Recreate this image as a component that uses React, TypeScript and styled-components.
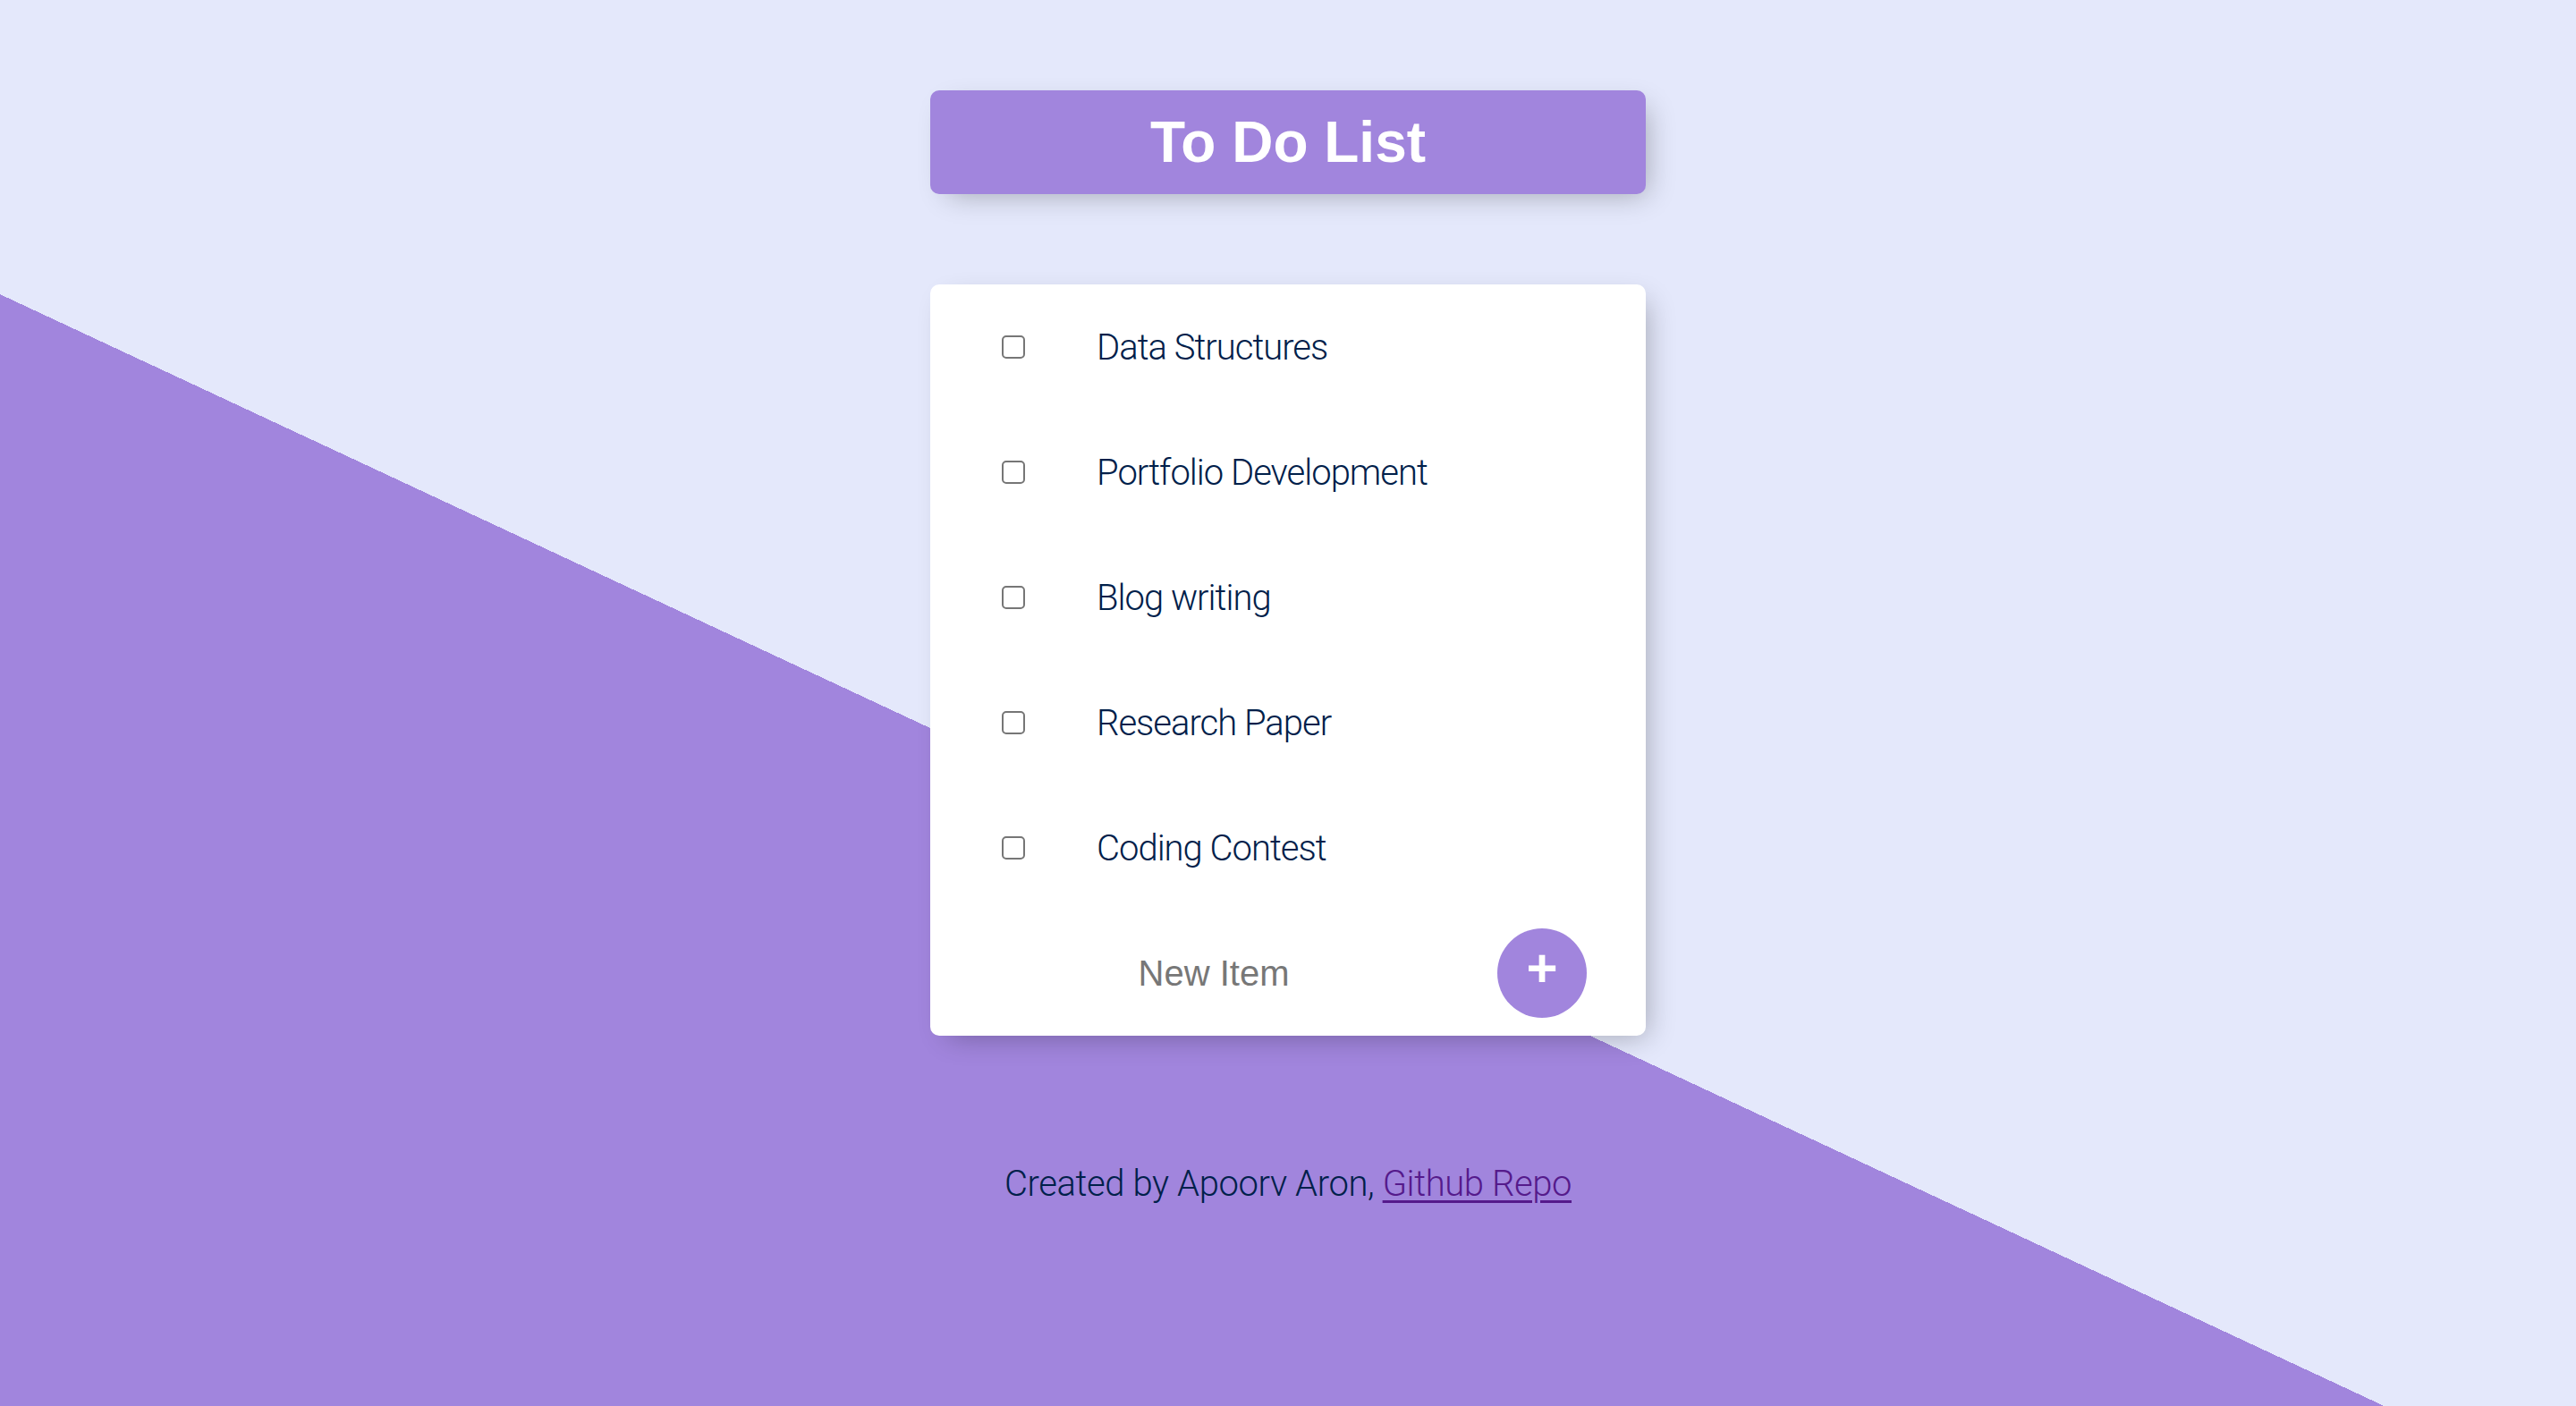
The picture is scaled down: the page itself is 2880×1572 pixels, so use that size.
import React from 'react';
import styled, { createGlobalStyle } from 'styled-components';

const lavender = '#E4E8FB';
const purple = '#A185DD';
const navy = '#00204A';

const GlobalStyle = createGlobalStyle`
  html, body {
    margin: 0;
    padding: 0;
  }
  body {
    background: ${lavender};
    font-family: Roboto, "Liberation Sans", sans-serif;
  }
`;

const Page = styled.div`
  min-height: 100vh;
  box-sizing: border-box;
  padding-top: 101px;
  overflow: hidden;
  background: linear-gradient(205deg, ${lavender} 57.36%, ${purple} 57.36%);
`;

const Box = styled.div`
  width: 800px;
  margin: 0 auto;
  border-radius: 10px;
  box-shadow: 10px 10px 30px -10px rgba(0, 0, 0, 0.3);
`;

const Heading = styled(Box)`
  height: 116px;
  display: flex;
  align-items: center;
  justify-content: center;
  background: ${purple};
`;

const Title = styled.h1`
  margin: 0;
  font-family: "Liberation Sans", Arial, sans-serif;
  font-size: 64px;
  font-weight: 700;
  color: #fff;
`;

const Card = styled(Box)`
  margin-top: 101px;
  background: #fff;
`;

const Item = styled.div`
  height: 140px;
  display: flex;
  align-items: center;
  padding-left: 80px;
`;

const Check = styled.input.attrs({ type: 'checkbox' })`
  appearance: none;
  margin: 0 80px 0 0;
  width: 26px;
  height: 26px;
  box-sizing: border-box;
  border: 2px solid #767676;
  border-radius: 5px;
  background: #fff;
  flex-shrink: 0;
`;

const Label = styled.p`
  margin: 0;
  font-size: 40px;
  font-weight: 300;
  letter-spacing: -1px;
  color: ${navy};
`;

const Form = styled.form`
  height: 140px;
  display: flex;
  align-items: center;
  padding-left: 4px;
  gap: 4px;
`;

const NewItem = styled.input`
  width: 626px;
  height: 120px;
  padding: 0;
  border: none;
  outline: none;
  text-align: center;
  font-family: "Liberation Sans", Arial, sans-serif;
  font-size: 40px;
  color: ${navy};
  background: transparent;
  &::placeholder {
    color: #777;
  }
`;

const AddButton = styled.button`
  width: 100px;
  height: 100px;
  padding: 0 0 10px;
  border: none;
  border-radius: 50%;
  background: ${purple};
  color: #fff;
  font-family: "Liberation Sans", Arial, sans-serif;
  font-size: 60px;
  font-weight: 700;
  line-height: 1;
  display: flex;
  align-items: center;
  justify-content: center;
`;

const Footer = styled.footer`
  margin-top: 142px;
  text-align: center;
  font-size: 40px;
  font-weight: 300;
  letter-spacing: -0.4px;
  line-height: 48px;
  color: ${navy};
`;

const RepoLink = styled.a`
  color: #551a8b;
  text-decoration: underline;
  text-decoration-thickness: 3px;
  text-underline-offset: 5px;
`;

const items = [
  'Data Structures',
  'Portfolio Development',
  'Blog writing',
  'Research Paper',
  'Coding Contest',
];

const App = () => (
  <>
    <GlobalStyle />
    <Page>
      <Heading>
        <Title>To Do List</Title>
      </Heading>
      <Card>
        {items.map(item => (
          <Item key={item}>
            <Check />
            <Label>{item}</Label>
          </Item>
        ))}
        <Form onSubmit={e => e.preventDefault()}>
          <NewItem type="text" placeholder="New Item" />
          <AddButton type="submit">+</AddButton>
        </Form>
      </Card>
      <Footer>
        Created by Apoorv Aron, <RepoLink href="#">Github Repo</RepoLink>
      </Footer>
    </Page>
  </>
);

export default App;
